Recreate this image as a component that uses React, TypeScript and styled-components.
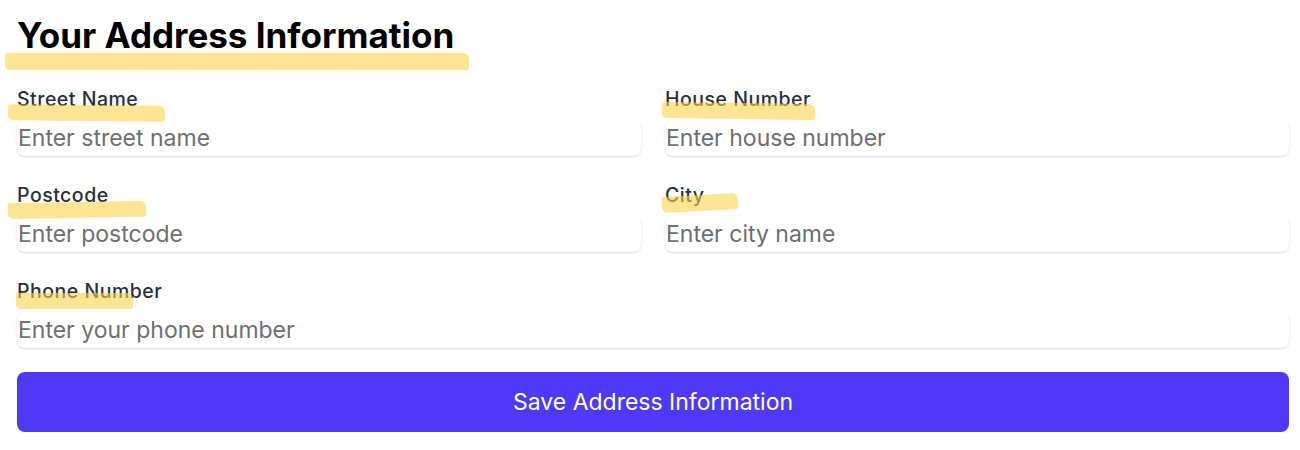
import styled, { createGlobalStyle } from "styled-components";

const GlobalStyle = createGlobalStyle`
  html, body {
    margin: 0;
    padding: 0;
    background: #ffffff;
    font-family: Inter, "Noto Sans", sans-serif;
  }
  * {
    box-sizing: border-box;
  }
`;

const Container = styled.form`
  padding: 15px 11px 0 17px;
`;

const TitleWrap = styled.div`
  position: relative;
  display: inline-block;
  margin-bottom: 29px;
`;

const Title = styled.h1`
  margin: 0;
  font-size: 35px;
  line-height: 40px;
  font-weight: 700;
  color: #000000;
`;

const Grid = styled.div`
  display: grid;
  grid-template-columns: 1fr 1fr;
  column-gap: 24px;
  row-gap: 24px;
`;

const Field = styled.div<{ $full?: boolean }>`
  display: flex;
  flex-direction: column;
  grid-column: ${(p) => (p.$full ? "1 / -1" : "auto")};
`;

const LabelWrap = styled.div`
  position: relative;
  align-self: flex-start;
  margin-bottom: 6px;
`;

const Label = styled.label`
  display: block;
  font-size: 19.5px;
  line-height: 30px;
  letter-spacing: 0.5px;
  font-weight: 500;
  color: #253041;
`;

const Highlight = styled.span<{
  $left: number;
  $top: number;
  $width: number;
  $height?: number;
  $rotate?: number;
}>`
  position: absolute;
  left: ${(p) => p.$left}px;
  top: ${(p) => p.$top}px;
  width: ${(p) => p.$width}px;
  height: ${(p) => p.$height ?? 16}px;
  background: rgba(252, 211, 77, 0.6);
  border-radius: 2px 6px 3px 5px;
  transform: rotate(${(p) => p.$rotate ?? 0}deg);
  pointer-events: none;
`;

const Input = styled.input`
  width: 100%;
  height: 36px;
  padding: 0 1px;
  border: none;
  border-radius: 8px;
  background: #ffffff;
  box-shadow: 0 1px 3px rgba(0, 0, 0, 0.1), 0 1px 2px rgba(0, 0, 0, 0.06);
  font-family: Inter, "Noto Sans", sans-serif;
  font-size: 23px;
  color: #1e293b;
  outline: none;
  &::placeholder {
    color: #6f6f6f;
  }
`;

const SaveButton = styled.button`
  width: 100%;
  height: 60px;
  margin-top: 24px;
  border: none;
  border-radius: 8px;
  background: #4f39f6;
  color: #ffffff;
  font-family: Inter, "Noto Sans", sans-serif;
  font-size: 23px;
  font-weight: 400;
  cursor: pointer;
`;

interface IField {
  id: string;
  label: string;
  placeholder: string;
  mark: { left: number; top: number; width: number; rotate?: number };
  full?: boolean;
}

const fields: IField[] = [
  { id: "street", label: "Street Name", placeholder: "Enter street name", mark: { left: -9, top: 21, width: 157, rotate: 0.5 } },
  { id: "house", label: "House Number", placeholder: "Enter house number", mark: { left: -3, top: 19, width: 153, rotate: 0.8 } },
  { id: "postcode", label: "Postcode", placeholder: "Enter postcode", mark: { left: -9, top: 22, width: 138, rotate: -1 } },
  { id: "city", label: "City", placeholder: "Enter city name", mark: { left: -3, top: 15, width: 76, rotate: -3 } },
  { id: "phone", label: "Phone Number", placeholder: "Enter your phone number", mark: { left: -1, top: 17, width: 117, rotate: 0 }, full: true },
];

function App() {
  return (
    <>
      <GlobalStyle />
      <Container onSubmit={(e) => e.preventDefault()}>
        <TitleWrap>
          <Title>Your Address Information</Title>
          <Highlight $left={-12} $top={38} $width={464} $height={17} />
        </TitleWrap>
        <Grid>
          {fields.map((f) => (
            <Field key={f.id} $full={f.full}>
              <LabelWrap>
                <Label htmlFor={f.id}>{f.label}</Label>
                <Highlight $left={f.mark.left} $top={f.mark.top} $width={f.mark.width} $rotate={f.mark.rotate} />
              </LabelWrap>
              <Input id={f.id} placeholder={f.placeholder} />
            </Field>
          ))}
        </Grid>
        <SaveButton type="submit">Save Address Information</SaveButton>
      </Container>
    </>
  );
}

export default App;
